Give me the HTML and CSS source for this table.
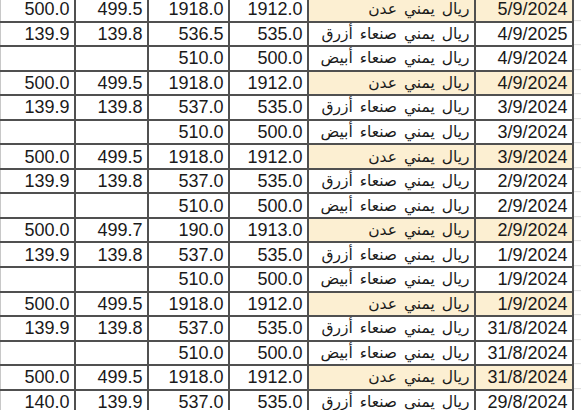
FILE: index.html
```html
<!DOCTYPE html>
<html lang="ar">
<head>
<meta charset="utf-8">
<title>أسعار الصرف</title>
<link rel="stylesheet" href="styles.css">
</head>
<body>
<div class="sheet">
<table class="rates" dir="rtl">
<colgroup>
<col class="c-date"><col class="c-type"><col class="c-a"><col class="c-b"><col class="c-c"><col class="c-d">
</colgroup>
<tbody>
<tr class="aden"><td class="num">5/9/2024</td><td class="name">ريال يمني عدن</td><td class="num">1912.0</td><td class="num">1918.0</td><td class="num">499.5</td><td class="num">500.0</td></tr>
<tr><td class="num">4/9/2025</td><td class="name">ريال يمني صنعاء أزرق</td><td class="num">535.0</td><td class="num">536.5</td><td class="num">139.8</td><td class="num">139.9</td></tr>
<tr><td class="num">4/9/2024</td><td class="name">ريال يمني صنعاء أبيض</td><td class="num">500.0</td><td class="num">510.0</td><td class="num"></td><td class="num"></td></tr>
<tr class="aden"><td class="num">4/9/2024</td><td class="name">ريال يمني عدن</td><td class="num">1912.0</td><td class="num">1918.0</td><td class="num">499.5</td><td class="num">500.0</td></tr>
<tr><td class="num">3/9/2024</td><td class="name">ريال يمني صنعاء أزرق</td><td class="num">535.0</td><td class="num">537.0</td><td class="num">139.8</td><td class="num">139.9</td></tr>
<tr><td class="num">3/9/2024</td><td class="name">ريال يمني صنعاء أبيض</td><td class="num">500.0</td><td class="num">510.0</td><td class="num"></td><td class="num"></td></tr>
<tr class="aden"><td class="num">3/9/2024</td><td class="name">ريال يمني عدن</td><td class="num">1912.0</td><td class="num">1918.0</td><td class="num">499.5</td><td class="num">500.0</td></tr>
<tr><td class="num">2/9/2024</td><td class="name">ريال يمني صنعاء أزرق</td><td class="num">535.0</td><td class="num">537.0</td><td class="num">139.8</td><td class="num">139.9</td></tr>
<tr><td class="num">2/9/2024</td><td class="name">ريال يمني صنعاء أبيض</td><td class="num">500.0</td><td class="num">510.0</td><td class="num"></td><td class="num"></td></tr>
<tr class="aden"><td class="num">2/9/2024</td><td class="name">ريال يمني عدن</td><td class="num">1913.0</td><td class="num">190.0</td><td class="num">499.7</td><td class="num">500.0</td></tr>
<tr><td class="num">1/9/2024</td><td class="name">ريال يمني صنعاء أزرق</td><td class="num">535.0</td><td class="num">537.0</td><td class="num">139.8</td><td class="num">139.9</td></tr>
<tr><td class="num">1/9/2024</td><td class="name">ريال يمني صنعاء أبيض</td><td class="num">500.0</td><td class="num">510.0</td><td class="num"></td><td class="num"></td></tr>
<tr class="aden"><td class="num">1/9/2024</td><td class="name">ريال يمني عدن</td><td class="num">1912.0</td><td class="num">1918.0</td><td class="num">499.5</td><td class="num">500.0</td></tr>
<tr><td class="num">31/8/2024</td><td class="name">ريال يمني صنعاء أزرق</td><td class="num">535.0</td><td class="num">537.0</td><td class="num">139.8</td><td class="num">139.9</td></tr>
<tr><td class="num">31/8/2024</td><td class="name">ريال يمني صنعاء أبيض</td><td class="num">500.0</td><td class="num">510.0</td><td class="num"></td><td class="num"></td></tr>
<tr class="aden"><td class="num">31/8/2024</td><td class="name">ريال يمني عدن</td><td class="num">1912.0</td><td class="num">1918.0</td><td class="num">499.5</td><td class="num">500.0</td></tr>
<tr><td class="num">29/8/2024</td><td class="name">ريال يمني صنعاء أزرق</td><td class="num">535.0</td><td class="num">537.0</td><td class="num">139.9</td><td class="num">140.0</td></tr>
</tbody>
</table>
</div>
</body>
</html>
```
FILE: styles.css
```css
html, body {
  margin: 0;
  padding: 0;
  background: #ffffff;
  overflow: hidden;
}

.sheet {
  width: 581px;
  height: 410px;
  overflow: hidden;
  background-image: repeating-linear-gradient(to bottom, transparent 0, transparent 23.55px, #dcdcdc 23.55px, #dcdcdc 24.55px);
  background-position: 0 -3.85px;
}

.rates {
  border-collapse: collapse;
  table-layout: fixed;
  width: 573px;
  margin-top: -4px;
  background: #ffffff;
  color: #1a1a1a;
}

.c-date { width: 98px; }
.c-type { width: 167px; }
.c-a { width: 79px; }
.c-b { width: 81px; }
.c-c { width: 73px; }
.c-d { width: 74px; }

.rates tr {
  height: 24.55px;
}

.rates td {
  border: 2px solid #505050;
  padding: 0 4px;
  line-height: 18px;
  white-space: nowrap;
}

.rates td:last-child {
  border-left: 1px solid #c8c8c8;
}

.num {
  direction: ltr;
  text-align: right;
  font-family: "Liberation Sans", Arial, sans-serif;
  font-size: 18px;
}

.name {
  text-align: right;
  font-family: "DejaVu Sans", sans-serif;
  font-size: 15.5px;
  word-spacing: 2px;
  padding-right: 5px;
}

.aden td:nth-child(1),
.aden td:nth-child(2) {
  background: #fcefd2;
}
```
